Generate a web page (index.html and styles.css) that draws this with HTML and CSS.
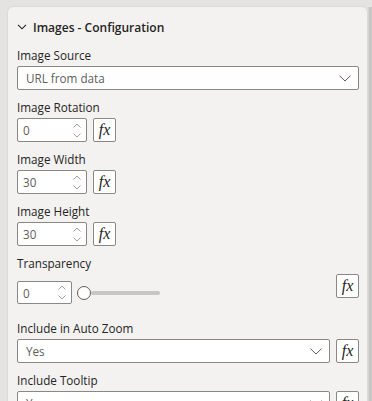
FILE: index.html
```html
<!DOCTYPE html>
<html lang="en">
<head>
    <meta charset="UTF-8">
    <meta name="viewport" content="width=device-width, initial-scale=1.0">
    <title>Format pane</title>
    <link rel="stylesheet" href="styles.css">
</head>
<body>

    <div class="pane">
        <div class="card">
            <div class="card-title">
                <svg class="title-chevron" width="10" height="6" viewBox="0 0 10 6"><path d="M1 0.8 L5 4.8 L9 0.8" fill="none" stroke="#252423" stroke-width="1.1"/></svg>
                <span>Images - Configuration</span>
            </div>

            <div class="field">
                <div class="label">Image Source</div>
                <div class="dropdown">
                    <span>URL from data</span>
                    <svg class="dd-chevron" width="12" height="7" viewBox="0 0 12 7"><path d="M0.5 0.7 L6 6 L11.5 0.7" fill="none" stroke="#605e5c" stroke-width="1"/></svg>
                </div>
            </div>

            <div class="field">
                <div class="label">Image Rotation</div>
                <div class="row">
                    <div class="spin"><span>0</span><div class="arrows"><svg width="8" height="15" viewBox="0 0 8 15"><path d="M0.5 4.5 L4 1 L7.5 4.5 M0.5 10.5 L4 14 L7.5 10.5" fill="none" stroke="#a19f9d" stroke-width="1"/></svg></div></div>
                    <div class="fx">fx</div>
                </div>
            </div>

            <div class="field">
                <div class="label">Image Width</div>
                <div class="row">
                    <div class="spin"><span>30</span><div class="arrows"><svg width="8" height="15" viewBox="0 0 8 15"><path d="M0.5 4.5 L4 1 L7.5 4.5 M0.5 10.5 L4 14 L7.5 10.5" fill="none" stroke="#a19f9d" stroke-width="1"/></svg></div></div>
                    <div class="fx">fx</div>
                </div>
            </div>

            <div class="field">
                <div class="label">Image Height</div>
                <div class="row">
                    <div class="spin"><span>30</span><div class="arrows"><svg width="8" height="15" viewBox="0 0 8 15"><path d="M0.5 4.5 L4 1 L7.5 4.5 M0.5 10.5 L4 14 L7.5 10.5" fill="none" stroke="#a19f9d" stroke-width="1"/></svg></div></div>
                    <div class="fx">fx</div>
                </div>
            </div>

            <div class="field">
                <div class="label">Transparency</div>
                <div class="row slider-row">
                    <div class="slider-group">
                        <div class="spin small"><span>0</span><div class="arrows"><svg width="8" height="15" viewBox="0 0 8 15"><path d="M0.5 4.5 L4 1 L7.5 4.5 M0.5 10.5 L4 14 L7.5 10.5" fill="none" stroke="#a19f9d" stroke-width="1"/></svg></div></div>
                        <div class="slider">
                            <div class="knob"></div>
                            <div class="track"></div>
                        </div>
                    </div>
                    <div class="fx">fx</div>
                </div>
            </div>

            <div class="field">
                <div class="label">Include in Auto Zoom</div>
                <div class="row">
                    <div class="dropdown grow">
                        <span>Yes</span>
                        <svg class="dd-chevron" width="12" height="7" viewBox="0 0 12 7"><path d="M0.5 0.7 L6 6 L11.5 0.7" fill="none" stroke="#605e5c" stroke-width="1"/></svg>
                    </div>
                    <div class="fx">fx</div>
                </div>
            </div>

            <div class="field">
                <div class="label">Include Tooltip</div>
                <div class="row">
                    <div class="dropdown grow">
                        <span>Yes</span>
                        <svg class="dd-chevron" width="12" height="7" viewBox="0 0 12 7"><path d="M0.5 0.7 L6 6 L11.5 0.7" fill="none" stroke="#605e5c" stroke-width="1"/></svg>
                    </div>
                    <div class="fx">fx</div>
                </div>
            </div>
        </div>
        <div class="scrollbar"></div>
    </div>

</body>
</html>
```

FILE: styles.css
```css
html, body { margin: 0; height: 100%; overflow: hidden; }
body { font-family: "Open Sans", "Noto Sans", sans-serif; font-size: 11.7px; color: #252423; background: #e4e3e1; }
.pane { display: flex; align-items: flex-start; padding: 7px 0 0 8px; height: 100%; box-sizing: border-box; }
.card { width: 359px; flex: none; background: #f3f2f1; border-radius: 5px 5px 0 0; padding: 12px 8px 0 9px; box-sizing: border-box; min-height: 420px; box-shadow: 0 0 2px rgba(0,0,0,0.12); }
.scrollbar { width: 4px; margin-left: 1px; height: 420px; background: #c8c6c4; border-left: 1px solid #d6d4d2; }

.card-title { display: flex; align-items: center; height: 16px; font-weight: 600; font-size: 12px; margin-bottom: 12px; }
.title-chevron { margin: 0 6px 0 0; }

.field { margin-bottom: 9px; }
.label { line-height: 16px; height: 16px; margin-bottom: 3px; white-space: nowrap; }
.row { display: flex; gap: 6px; align-items: center; }

.dropdown { display: flex; align-items: center; justify-content: space-between; height: 24px; box-sizing: border-box; border: 1px solid #8a8886; border-radius: 2px; background: #fff; padding: 0 7px 0 8px; color: #605e5c; }
.dropdown.grow { flex: 1; }
.dd-chevron { flex: none; }

.spin { display: flex; align-items: center; justify-content: space-between; width: 70px; height: 24px; box-sizing: border-box; border: 1px solid #8a8886; border-radius: 2px; background: #fff; padding: 0 5px 0 5px; color: #605e5c; }
.spin.small { width: 55px; height: 23px; }
.arrows { display: flex; }

.fx { width: 23px; height: 24px; flex: none; box-sizing: border-box; border: 1px solid #8a8886; border-radius: 2px; background: #fff; font-family: "Liberation Serif", serif; font-style: italic; font-size: 16px; line-height: 21px; text-align: center; color: #252423; }

.slider-row { justify-content: space-between; align-items: flex-start; height: 37px; }
.slider-group { display: flex; align-items: center; gap: 5px; margin-top: 7px; }
.slider { display: flex; align-items: center; }
.knob { width: 12px; height: 12px; border: 1px solid #605e5c; border-radius: 50%; background: #fff; }
.track { width: 69px; height: 4px; background: #c8c6c4; border-radius: 2px; }
```
